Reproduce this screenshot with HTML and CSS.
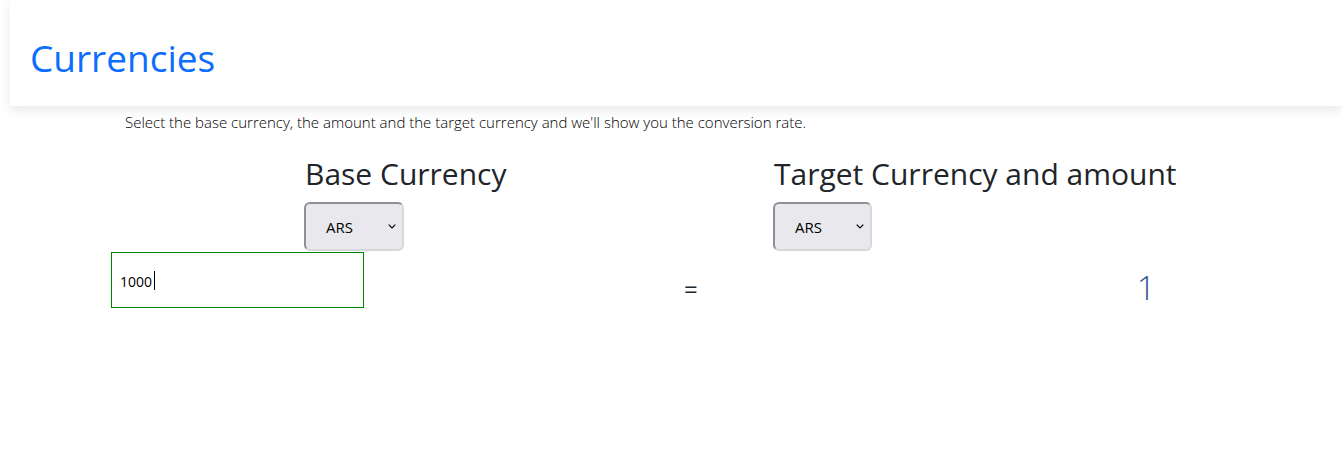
FILE: index.html
```html
<!DOCTYPE html>
<html lang="en">
<head>
<meta charset="utf-8">
<title>Currencies</title>
<link rel="stylesheet" href="styles.css">
</head>
<body>
<header class="topbar">
  <h1 class="brand">Currencies</h1>
</header>
<p class="intro">Select the base currency, the amount and the target currency and we'll show you the conversion rate.</p>
<section class="converter">
  <div class="row heads">
    <div class="col base">
      <h2 class="col-title">Base Currency</h2>
      <select class="currency"><option>ARS</option></select>
    </div>
    <div class="col target">
      <h2 class="col-title">Target Currency and amount</h2>
      <select class="currency"><option>ARS</option></select>
    </div>
  </div>
  <div class="row amounts">
    <span class="field">
      <input class="amount" type="text" value="1000">
      <span class="caret"></span>
    </span>
    <span class="equals">=</span>
    <span class="result">1</span>
  </div>
</section>
</body>
</html>
```

FILE: styles.css
```css
html, body {
  margin: 0;
  padding: 0;
  background: #fff;
  overflow-x: hidden;
}
body {
  font-family: "Open Sans", "Noto Sans", sans-serif;
  color: #212529;
}
.topbar {
  margin-left: 10px;
  height: 106px;
  box-shadow: 0 4px 10px rgba(0, 0, 0, 0.09);
  display: flex;
  align-items: center;
  padding-left: 20px;
  background: #fff;
}
.brand {
  margin: 0;
  font-weight: 400;
  font-size: 37px;
  line-height: 1.2;
  color: #0d6efd;
  padding-top: 10px;
}
.intro {
  margin: 5px 0 0 125px;
  font-size: 15px;
  line-height: 22px;
  color: #000;
  font-weight: 300;
}
.converter {
  margin-top: 22px;
}
.row {
  display: flex;
}
.heads {
  padding-left: 304px;
}
.col {
  display: flex;
  flex-direction: column;
  align-items: flex-start;
}
.base {
  width: 469px;
}
.col-title {
  margin: 0 0 9px 1px;
  font-size: 30px;
  line-height: 38px;
  font-weight: 400;
  color: #212529;
}
.currency {
  appearance: none;
  -webkit-appearance: none;
  width: 100px;
  height: 49px;
  padding: 0 0 0 20px;
  font-family: "Open Sans", sans-serif;
  font-size: 15px;
  color: #000;
  background-color: #e9e9ed;
  border: 2px solid;
  border-color: #8f8f94 #d8d8dc #d8d8dc #8f8f94;
  border-radius: 6px;
  background-image: url("data:image/svg+xml;utf8,<svg xmlns='http://www.w3.org/2000/svg' width='8' height='5' viewBox='0 0 8 5'><path d='M0.7 0.7 L4 4 L7.3 0.7' fill='none' stroke='%23000' stroke-width='1.2'/></svg>");
  background-repeat: no-repeat;
  background-position: right 6px center;
}
.target .currency {
  width: 99px;
}
.amounts {
  padding-left: 111px;
  align-items: center;
  margin-top: 1px;
}
.field {
  position: relative;
  display: inline-block;
}
.amount {
  box-sizing: border-box;
  width: 253px;
  height: 56px;
  border: 1px solid #008000;
  padding: 2px 0 0 8px;
  font-family: "Open Sans", sans-serif;
  font-size: 14px;
  color: #000;
  outline: none;
  background: #fff;
}
.caret {
  position: absolute;
  left: 43px;
  top: 19px;
  width: 1px;
  height: 19px;
  background: #000;
}
.equals {
  margin-left: 320px;
  font-size: 24px;
  line-height: 1;
  padding-top: 18px;
  color: #212529;
}
.result {
  margin-left: 439px;
  font-size: 33px;
  font-weight: 300;
  line-height: 1;
  padding-top: 14px;
  color: #2f568c;
}
```
